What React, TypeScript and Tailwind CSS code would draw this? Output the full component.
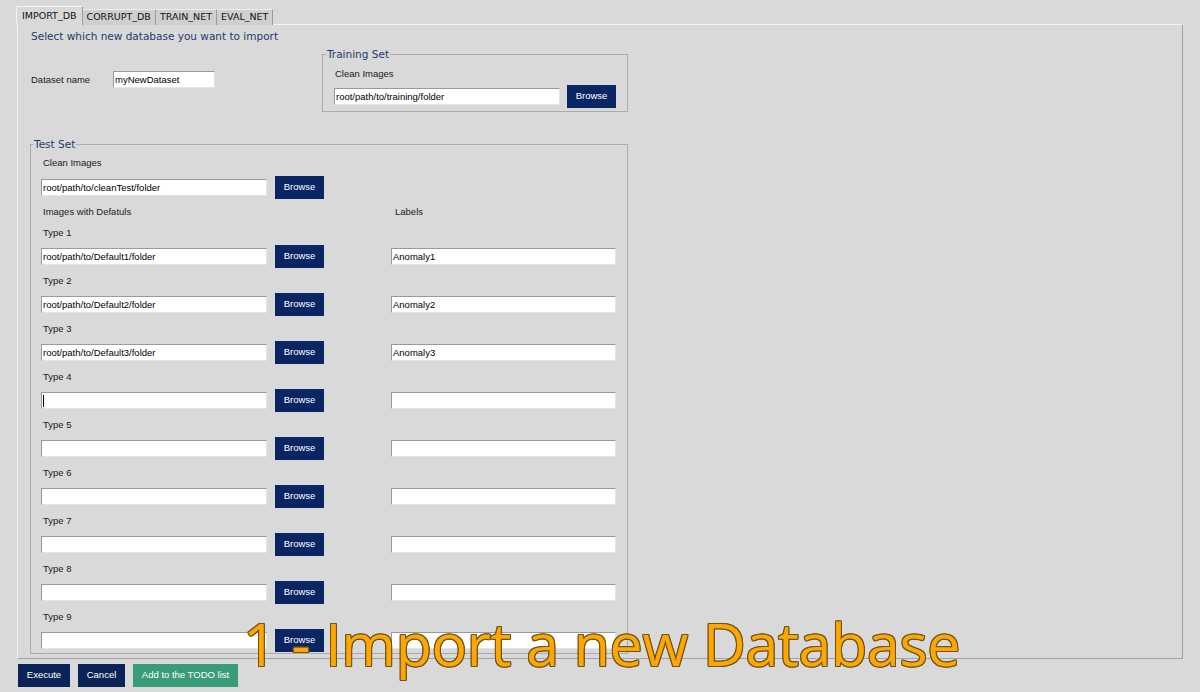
import React from 'react';

const lbl = "font-['Liberation_Sans',Arial,sans-serif] text-[9.5px] leading-[12px] text-[#1a1a1a]";
const legend = "font-['DejaVu_Sans',sans-serif] text-[10.5px] leading-[13px] text-[#1f3a6d]";

function Field({ value = '', w, cursor = false }: { value?: string; w: string; cursor?: boolean }) {
  return (
    <div
      className={`${w} h-[17px] bg-white border border-t-[#9a9a9a] border-l-[#9a9a9a] border-r-[#e4e4e4] border-b-[#e4e4e4] flex items-center pl-[1px] ${lbl} text-black overflow-hidden whitespace-nowrap`}
    >
      {cursor && <span className="w-[1px] h-[12px] bg-black" />}
      {value}
    </div>
  );
}

function BrowseButton() {
  return (
    <div className="w-[49px] h-[23px] bg-[#0a2563] flex items-center justify-center text-white font-['Liberation_Sans',Arial,sans-serif] text-[9.5px]">
      Browse
    </div>
  );
}

const types = [
  { path: 'root/path/to/Default1/folder', label: 'Anomaly1' },
  { path: 'root/path/to/Default2/folder', label: 'Anomaly2' },
  { path: 'root/path/to/Default3/folder', label: 'Anomaly3' },
  { path: '', label: '', cursor: true },
  { path: '', label: '' },
  { path: '', label: '' },
  { path: '', label: '' },
  { path: '', label: '' },
  { path: '', label: '' },
];

export default function App() {
  return (
    <div className="w-[1200px] h-[692px] bg-[#d9d9d9] relative overflow-hidden">
      {/* tabs */}
      <div className="flex items-end pt-[6px] pl-[16px] -mb-px relative z-10 font-['DejaVu_Sans',sans-serif] text-[9.5px] text-[#111]">
        <div className="h-[19px] px-[5px] bg-[#d9d9d9] border-t border-l border-[#f4f4f4] border-r border-r-[#9c9c9c] flex items-center">
          IMPORT_DB
        </div>
        <div className="h-[16px] px-[4px] bg-[#cfcfcf] border-t border-t-[#eeeeee] border-r border-r-[#9c9c9c] flex items-center">
          CORRUPT_DB
        </div>
        <div className="h-[16px] px-[4px] bg-[#cfcfcf] border-t border-t-[#eeeeee] border-r border-r-[#9c9c9c] flex items-center">
          TRAIN_NET
        </div>
        <div className="h-[16px] px-[4px] bg-[#cfcfcf] border-t border-t-[#eeeeee] border-r border-r-[#9c9c9c] flex items-center">
          EVAL_NET
        </div>
      </div>

      {/* panel */}
      <div className="ml-[17px] w-[1166px] h-[635px] border border-t-[#f4f4f4] border-l-[#f4f4f4] border-r-[#a2a2a2] border-b-[#a2a2a2]">
        <div className={`mt-[5px] ml-[13px] ${legend}`}>Select which new database you want to import</div>

        <div className="flex">
          <div className="ml-[13px] w-[291px] pt-[28px] flex items-start">
            <div className="flex items-center">
              <div className={`w-[82px] ${lbl}`}>Dataset name</div>
              <Field value="myNewDataset" w="w-[102px]" />
            </div>
          </div>
          <fieldset className="mt-[5px] w-[306px] h-[64px] border border-[#ababab] pl-[11px]">
            <legend className={`-ml-[8px] px-[1px] ${legend}`}>Training Set</legend>
            <div className={`mt-[7px] ml-[1px] ${lbl}`}>Clean Images</div>
            <div className="mt-[5px] flex items-center">
              <Field value="root/path/to/training/folder" w="w-[226px]" />
              <div className="ml-[7px]">
                <BrowseButton />
              </div>
            </div>
          </fieldset>
        </div>

        <fieldset className="mt-[26px] ml-[12px] w-[598px] h-[516px] border border-[#ababab] pl-[10px]">
          <legend className={`-ml-[8px] px-[1px] ${legend}`}>Test Set</legend>
          <div className={`mt-[6px] ml-[2px] ${lbl}`}>Clean Images</div>
          <div className="mt-[7px] flex items-center">
            <Field value="root/path/to/cleanTest/folder" w="w-[226px]" />
            <div className="ml-[8px]">
              <BrowseButton />
            </div>
          </div>
          <div className={`mt-[7px] ml-[2px] flex ${lbl}`}>
            <div className="w-[352px]">Images with Defatuls</div>
            <div>Labels</div>
          </div>
          <div className="mt-[3px]">
            {types.map((t, i) => (
              <div key={i} className="h-[48px] pt-[6px]">
                <div className={`ml-[2px] ${lbl}`}>Type {i + 1}</div>
                <div className="mt-[6px] flex items-center">
                  <Field value={t.path} w="w-[226px]" cursor={t.cursor} />
                  <div className="ml-[8px]">
                    <BrowseButton />
                  </div>
                  <div className="ml-[67px]">
                    <Field value={t.label} w="w-[225px]" />
                  </div>
                </div>
              </div>
            ))}
          </div>
        </fieldset>
      </div>

      {/* bottom buttons */}
      <div className="mt-[5px] ml-[18px] flex gap-[8px] font-['Liberation_Sans',Arial,sans-serif] text-[9.5px] text-white">
        <div className="w-[52px] h-[23px] bg-[#0b2457] flex items-center justify-center">Execute</div>
        <div className="w-[47px] h-[23px] bg-[#0b2457] flex items-center justify-center">Cancel</div>
        <div className="w-[105px] h-[23px] bg-[#399c79] flex items-center justify-center">Add to the TODO list</div>
      </div>

      {/* caption overlay */}
      <div className="absolute left-[243px] top-[614px] font-['Open_Sans',sans-serif] font-medium text-[59px] tracking-[-0.3px] leading-none text-[#ffa600] [text-shadow:-1px_-1px_0_#6b5520,1px_-1px_0_#6b5520,-1px_1px_0_#6b5520,1px_1px_0_#6b5520,0_1px_0_#6b5520,0_-1px_0_#6b5520,1px_0_0_#6b5520,-1px_0_0_#6b5520] whitespace-nowrap">
        1 - Import a new Database
      </div>
    </div>
  );
}
